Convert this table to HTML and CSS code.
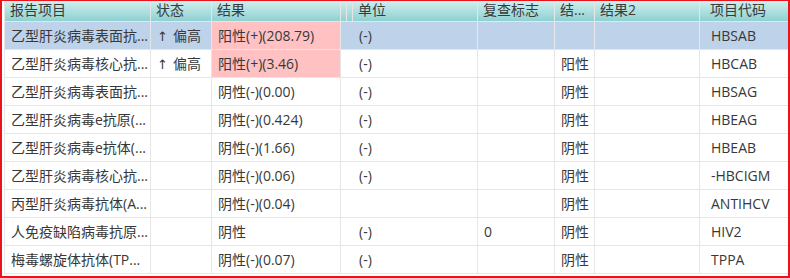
FILE: index.html
```html
<!DOCTYPE html>
<html lang="zh-CN">
<head>
<meta charset="utf-8">
<link rel="stylesheet" href="styles.css">
</head>
<body>
<div class="frame">
  <div class="grid">
    <div class="row head">
      <div>报告项目</div><div>状态</div><div>结果</div><div></div><div></div><div>单位</div><div>复查标志</div><div>结...</div><div>结果2</div><div></div><div>项目代码</div>
    </div>
    <div class="row sel">
      <div>乙型肝炎病毒表面抗...</div><div><span class="arr">↑</span>偏高</div><div class="pos">阳性(+)(208.79)</div><div></div><div></div><div>(-)</div><div></div><div></div><div></div><div></div><div>HBSAB</div>
    </div>
    <div class="row">
      <div>乙型肝炎病毒核心抗...</div><div><span class="arr">↑</span>偏高</div><div class="pos">阳性(+)(3.46)</div><div></div><div></div><div>(-)</div><div></div><div>阳性</div><div></div><div></div><div>HBCAB</div>
    </div>
    <div class="row">
      <div>乙型肝炎病毒表面抗...</div><div></div><div>阴性(-)(0.00)</div><div></div><div></div><div>(-)</div><div></div><div>阴性</div><div></div><div></div><div>HBSAG</div>
    </div>
    <div class="row">
      <div>乙型肝炎病毒e抗原(...</div><div></div><div>阴性(-)(0.424)</div><div></div><div></div><div>(-)</div><div></div><div>阴性</div><div></div><div></div><div>HBEAG</div>
    </div>
    <div class="row">
      <div>乙型肝炎病毒e抗体(...</div><div></div><div>阴性(-)(1.66)</div><div></div><div></div><div>(-)</div><div></div><div>阴性</div><div></div><div></div><div>HBEAB</div>
    </div>
    <div class="row">
      <div>乙型肝炎病毒核心抗...</div><div></div><div>阴性(-)(0.06)</div><div></div><div></div><div>(-)</div><div></div><div>阴性</div><div></div><div></div><div>-HBCIGM</div>
    </div>
    <div class="row">
      <div>丙型肝炎病毒抗体(A...</div><div></div><div>阴性(-)(0.04)</div><div></div><div></div><div></div><div></div><div>阴性</div><div></div><div></div><div>ANTIHCV</div>
    </div>
    <div class="row">
      <div>人免疫缺陷病毒抗原...</div><div></div><div>阴性</div><div></div><div></div><div>(-)</div><div>0</div><div>阴性</div><div></div><div></div><div>HIV2</div>
    </div>
    <div class="row">
      <div>梅毒螺旋体抗体(TP...</div><div></div><div>阴性(-)(0.07)</div><div></div><div></div><div>(-)</div><div></div><div>阴性</div><div></div><div></div><div>TPPA</div>
    </div>
  </div>
</div>
</body>
</html>
```
FILE: styles.css
```css
html, body {
  margin: 0;
  padding: 0;
  background: #ffffff;
}

.frame {
  box-sizing: border-box;
  width: 790px;
  height: 278px;
  border: 2px solid #e8141b;
  border-top-width: 1px;
  padding-left: 2px;
  background: #ffffff;
  font-family: "Open Sans", "Noto Sans CJK SC", sans-serif;
  font-size: 14px;
  color: #383838;
}

.grid {
  display: grid;
  grid-template-columns: 145px 60px 128px 5px 5px 124px 76px 39px 104px 4px 83px;
  grid-template-rows: 20px repeat(9, 27px);
  gap: 1px;
  padding: 0 0 1px 1px;
  background: #e6e6e6;
  width: max-content;
}

.row {
  display: contents;
}

.row > div {
  background: #ffffff;
  padding-left: 6px;
  white-space: nowrap;
  overflow: hidden;
  line-height: 27px;
}

.row.head > div {
  background: linear-gradient(#d0eeee, #8fd1d1);
  line-height: 17px;
  color: #3a3a3a;
  padding-left: 5px;
}

.row.sel > div {
  background: #bed3ea;
}

.row > div.pos {
  background: #ffc1c1;
}

.arr {
  display: inline-block;
  font-family: "DejaVu Sans", sans-serif;
  font-size: 13px;
  margin-right: 5px;
}
```
